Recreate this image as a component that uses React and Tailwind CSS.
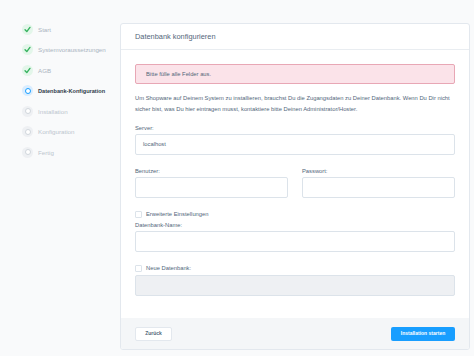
import React from 'react';

const STEPS = [
  { label: 'Start', state: 'done' },
  { label: 'Systemvoraussetzungen', state: 'done' },
  { label: 'AGB', state: 'done' },
  { label: 'Datenbank-Konfiguration', state: 'active' },
  { label: 'Installation', state: 'todo' },
  { label: 'Konfiguration', state: 'todo' },
  { label: 'Fertig', state: 'todo' },
];

function StepIcon({ state }) {
  if (state === 'done') {
    return (
      <span className="flex h-[11px] w-[11px] items-center justify-center rounded-full bg-[#e3f6ea]">
        <svg width="7" height="7" viewBox="0 0 10 10">
          <path d="M1.5 5.5 L4 8 L8.5 2" fill="none" stroke="#37b35f" strokeWidth="2" strokeLinecap="round" strokeLinejoin="round" />
        </svg>
      </span>
    );
  }
  if (state === 'active') {
    return (
      <span className="flex h-[11px] w-[11px] items-center justify-center rounded-full bg-[#d9edff]">
        <span className="h-[6px] w-[6px] rounded-full border border-[#189eff] bg-white" />
      </span>
    );
  }
  return (
    <span className="flex h-[11px] w-[11px] items-center justify-center rounded-full bg-[#eef0f3]">
      <span className="h-[6px] w-[6px] rounded-full border border-[#d1d6dc] bg-white" />
    </span>
  );
}

function Label({ children }) {
  return <div className="mb-[2px] text-[5.8px] leading-[8px] text-[#52667a]">{children}</div>;
}

function Input({ value, disabled }) {
  return (
    <div
      className={
        'flex h-[21px] items-center rounded-[2px] border border-[#dce3ea] px-[7px] text-[5.8px] text-[#52667a] ' +
        (disabled ? 'bg-[#eef0f3]' : 'bg-white')
      }
    >
      {value}
    </div>
  );
}

function Check({ label }) {
  return (
    <div className="flex h-[8px] items-center gap-[4px]">
      <span className="h-[7px] w-[7px] rounded-[1px] border border-[#dce3ea] bg-white" />
      <span className="text-[5.8px] text-[#52667a]">{label}</span>
    </div>
  );
}

export default function App() {
  return (
    <div
      className="flex h-[356px] w-[474px] bg-[#f9fafb] text-[#52667a]"
      style={{ fontFamily: '"Liberation Sans", Arial, sans-serif' }}
    >
      {/* Sidebar */}
      <div className="w-[120px] shrink-0 pl-[22px] pt-[19px]">
        {STEPS.map((s) => (
          <div key={s.label} className="flex h-[20.5px] items-center gap-[5px]">
            <StepIcon state={s.state} />
            <span
              className={
                s.state === 'active'
                  ? 'text-[5.6px] font-bold text-[#2f3d4a]'
                  : s.state === 'done'
                  ? 'text-[6.2px] text-[#a9b4bf]'
                  : 'text-[6.2px] text-[#bcc5ce]'
              }
            >
              {s.label}
            </span>
          </div>
        ))}
      </div>

      {/* Card */}
      <div className="mt-[23px] mb-[6px] flex w-[350px] flex-col overflow-hidden rounded-[3px] border border-[#e3e8ee] bg-white">
        <div className="flex h-[26px] shrink-0 items-center border-b border-[#e9edf1] px-[14px] text-[7.4px] text-[#52667a]">
          Datenbank konfigurieren
        </div>

        <div className="flex-1 px-[14px] pt-[14px]">
          <div className="flex h-[20px] items-center rounded-[2px] border border-[#e8a7b5] bg-[#fbe3e9] px-[10px] text-[5.8px] text-[#52667a]">
            Bitte fülle alle Felder aus.
          </div>

          <p className="mt-[9px] text-[5.8px] leading-[10.5px] text-[#52667a]">
            Um Shopware auf Deinem System zu installieren, brauchst Du die Zugangsdaten zu Deiner Datenbank. Wenn Du Dir nicht sicher bist, was Du hier eintragen musst, kontaktiere bitte Deinen Administrator/Hoster.
          </p>

          <div className="mt-[10px]">
            <Label>Server:</Label>
            <Input value="localhost" />
          </div>

          <div className="mt-[12px] grid grid-cols-2 gap-[14px]">
            <div>
              <Label>Benutzer:</Label>
              <Input />
            </div>
            <div>
              <Label>Passwort:</Label>
              <Input />
            </div>
          </div>

          <div className="mt-[12px]">
            <Check label="Erweiterte Einstellungen" />
          </div>

          <div className="mt-[3px]">
            <Label>Datenbank-Name:</Label>
            <Input />
          </div>

          <div className="mt-[12px]">
            <div className="mb-[3px]">
              <Check label="Neue Datenbank:" />
            </div>
            <Input disabled />
          </div>
        </div>

        <div className="flex h-[31px] shrink-0 items-center justify-between bg-[#f4f6f8] px-[14px]">
          <button className="flex h-[14px] w-[37px] items-center justify-center rounded-[2px] border border-[#e3e8ee] bg-white text-[5px] font-bold text-[#52667a]">
            Zurück
          </button>
          <button className="flex h-[14px] w-[64px] items-center justify-center rounded-[2px] bg-[#189eff] text-[5px] font-bold text-white">
            Installation starten
          </button>
        </div>
      </div>
    </div>
  );
}
